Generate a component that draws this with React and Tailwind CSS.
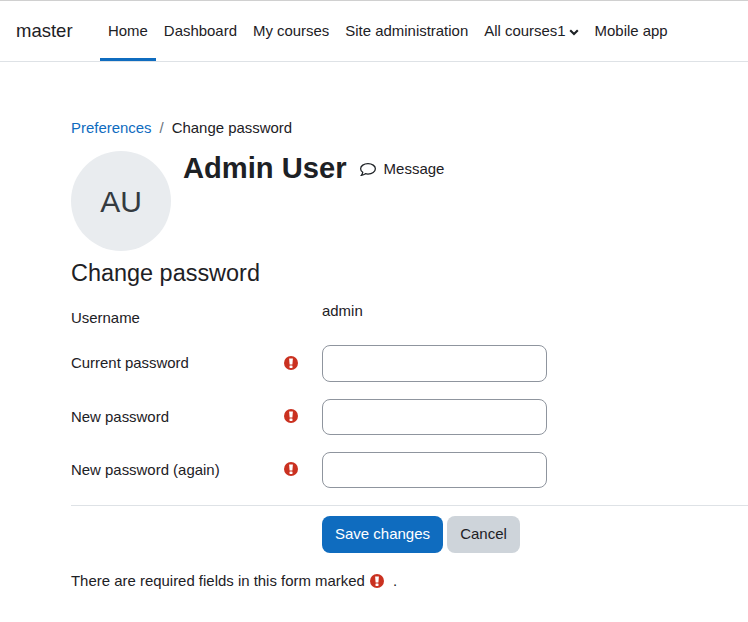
import React from "react";

const Req = ({ className = "" }) => (
  <svg viewBox="0 0 14 14" className={"w-[14px] h-[14px] shrink-0 " + className}>
    <circle cx="7" cy="7" r="7" fill="#ca3120" />
    <path d="M5.1 2.4h3.8l-.5 6.1H5.6z" fill="#fff" />
    <rect x="5.5" y="9.5" width="3" height="2.4" rx="0.4" fill="#fff" />
  </svg>
);

const Row = ({ label, className = "" }) => (
  <div className={"flex items-center " + className}>
    <div className="w-[213px] text-[14.95px] leading-[22px] mt-[-1px]">{label}</div>
    <div className="w-[38px] flex mt-[-2px]"><Req /></div>
    <input type="text" className="w-[225px] h-full bg-white border border-[#8f959e] rounded-lg outline-none" />
  </div>
);

export default function App() {
  const items = ["Dashboard", "My courses", "Site administration"];
  return (
    <div className="min-h-[622px] bg-white text-[#1d2125] font-['Liberation_Sans',Arial,sans-serif] overflow-hidden border-t border-[#d0d0d0]">
      <header className="h-[61px] border-b border-[#dee2e6] flex items-stretch pl-4 text-[14.95px]">
        <div className="flex items-center text-[18.5px] w-[84px]">master</div>
        <nav className="flex items-stretch">
          <a className="flex items-center px-2 pt-[3px] border-b-[3px] border-[#0f6cbf] h-[60px]">Home</a>
          {items.map((t) => (
            <a key={t} className="flex items-center px-2">{t}</a>
          ))}
          <a className="flex items-center pl-2 pr-2">
            All courses1
            <svg viewBox="0 0 10 7" className="w-[10px] h-[7px] ml-[3px] mt-[3px]" fill="none" stroke="#1d2125" strokeWidth="2.1">
              <path d="M1.2 1.2 5 5l3.8-3.8" />
            </svg>
          </a>
          <a className="flex items-center px-2">Mobile app</a>
        </nav>
      </header>

      <main className="pl-[71px] pt-[55px]">
        <div className="flex items-center text-[14.95px] leading-[22px]">
          <a className="text-[#0f6cbf]">Preferences</a>
          <span className="mx-2 text-[#6a737b]">/</span>
          <span>Change password</span>
        </div>

        <div className="flex mt-[12px]">
          <div className="w-[100px] h-[100px] rounded-full bg-[#e9ecef] flex items-center justify-center text-[30px] text-[#343a40]">AU</div>
          <div className="flex items-center h-[34px] ml-3">
            <h1 className="text-[29.15px] leading-[34px] font-bold">Admin User</h1>
            <a className="flex items-center ml-[13px] text-[15px] mt-[2px]">
              <svg viewBox="0.4 0.4 15.2 12.2" className="w-4 h-[13px] mr-2" fill="none" stroke="#1d2125" strokeWidth="1.2">
                <path d="M8 1C4.1 1 1 3 1 5.8c0 1.4.8 2.6 2 3.4-.1 1-.7 2-1.3 2.8 1.5-.2 2.9-.8 3.9-1.5.7.2 1.5.3 2.4.3 3.9 0 7-2.2 7-5C15 3 11.9 1 8 1z" />
              </svg>
              Message
            </a>
          </div>
        </div>

        <h2 className="text-[23.44px] leading-[28px] mt-2">Change password</h2>

        <div className="flex mt-[13px] h-[38px] text-[14.95px] leading-[22px]">
          <div className="w-[251px] pt-[7px]">Username</div>
          <div>admin</div>
        </div>
        <Row label="Current password" className="mt-[7px] h-[37px]" />
        <Row label="New password" className="mt-[17px] h-[36px]" />
        <Row label="New password (again)" className="mt-[17px] h-[36px]" />

        <div className="border-t border-[#dee2e6] mt-[17px] pt-[10px] pl-[251px] flex gap-1 text-[15px]">
          <button className="w-[121px] h-[37px] rounded-lg bg-[#0f6cbf] text-white">Save changes</button>
          <button className="w-[73px] h-[37px] rounded-lg bg-[#ced4da]">Cancel</button>
        </div>

        <div className="flex items-center text-[14.95px] leading-[22px] mt-[17px]">
          There are required fields in this form marked
          <Req className="ml-[5px] mt-[-1px]" />
          <span className="ml-[9px]">.</span>
        </div>
      </main>
    </div>
  );
}
